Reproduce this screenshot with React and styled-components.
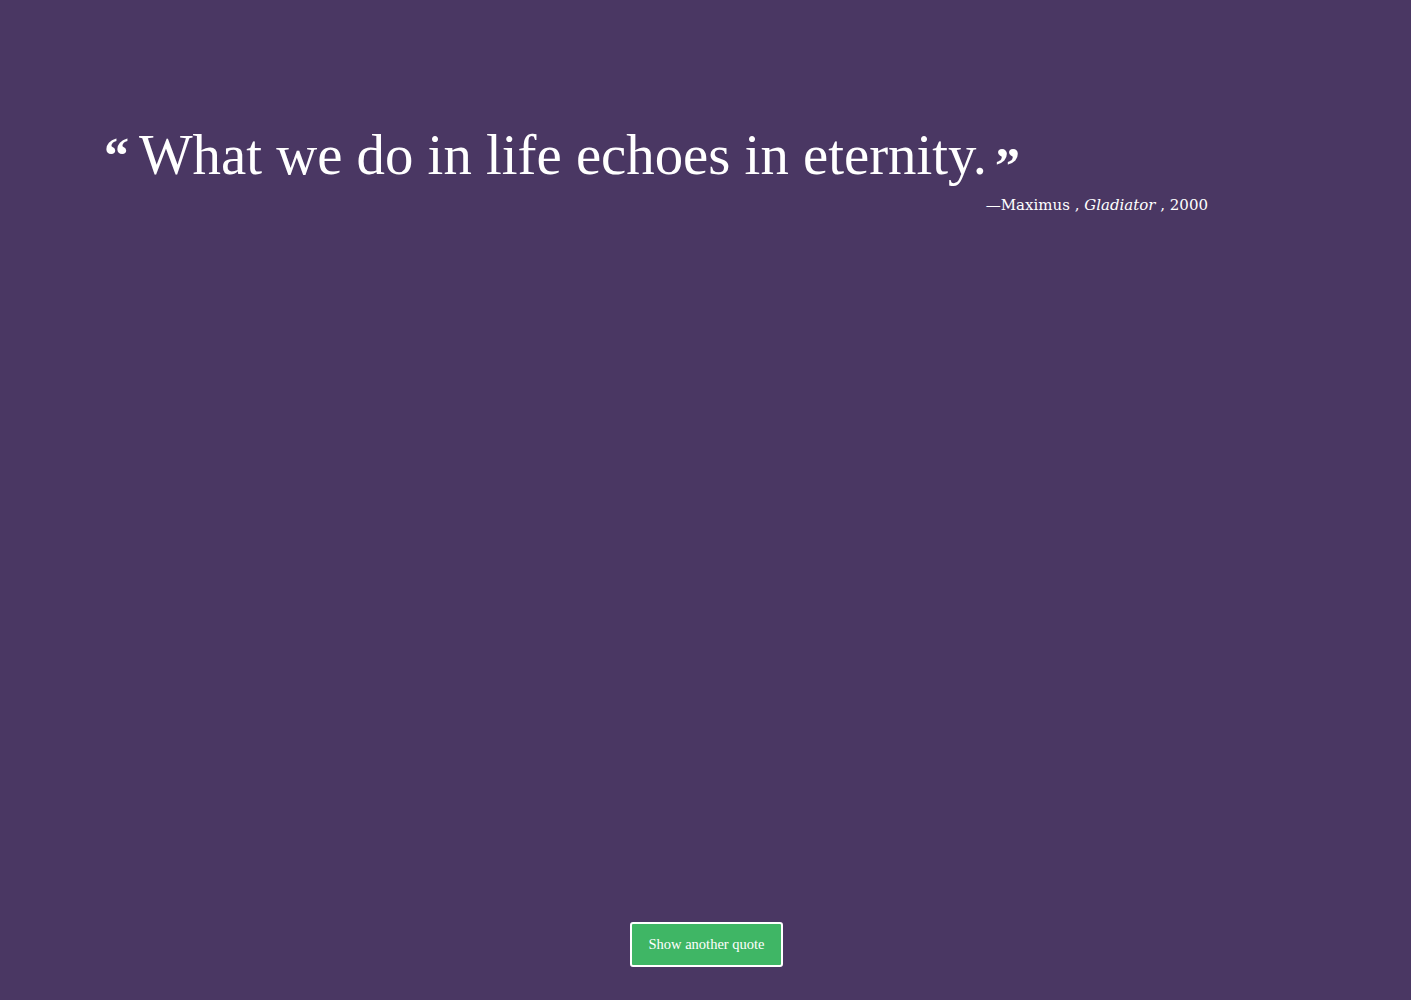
import React from "react";
import styled, { createGlobalStyle } from "styled-components";

const GlobalStyle = createGlobalStyle`
    html, body {
        margin: 0;
        padding: 0;
        background-color: #4a3763;
    }
`;

const Page = styled.div`
    min-height: 100vh;
    box-sizing: border-box;
    display: flex;
    flex-direction: column;
    justify-content: space-between;
    align-items: stretch;
    padding: 120px 203px 33px 104px;
    color: #ffffff;
    font-family: "Liberation Serif", "DejaVu Serif", serif;
`;

const Figure = styled.figure`
    margin: 0;
    display: flex;
    flex-direction: column;
`;

const QuoteText = styled.blockquote`
    margin: 0;
    display: flex;
    align-items: flex-start;
    font-size: 56.8px;
    line-height: 70px;
    white-space: nowrap;
`;

const Mark = styled.span`
    font-family: "Liberation Serif", serif;
    font-size: 50px;
    font-weight: bold;
    line-height: 1;
    margin: ${props => (props.close ? "20px 0 0 8px" : "10px 10px 0 0")};
`;

const Caption = styled.figcaption`
    align-self: flex-end;
    font-family: "DejaVu Serif", serif;
    font-size: 15px;
    margin-top: 6px;
`;

const Footer = styled.div`
    display: flex;
    justify-content: center;
    padding-left: 101px;
`;

const Button = styled.button`
    width: 153px;
    height: 45px;
    background-color: #3fb665;
    color: #ffffff;
    border: 2px solid #ffffff;
    border-radius: 3px;
    font-family: "Liberation Serif", "DejaVu Serif", serif;
    font-size: 14.5px;
    cursor: pointer;
`;

export default function App() {
    return (
        <>
            <GlobalStyle />
            <Page>
                <Figure>
                    <QuoteText>
                        <Mark>&#8220;</Mark>
                        What we do in life echoes in eternity.
                        <Mark close>&#8221;</Mark>
                    </QuoteText>
                    <Caption>
                        —Maximus , <i>Gladiator</i> , 2000
                    </Caption>
                </Figure>
                <Footer>
                    <Button>Show another quote</Button>
                </Footer>
            </Page>
        </>
    );
}
